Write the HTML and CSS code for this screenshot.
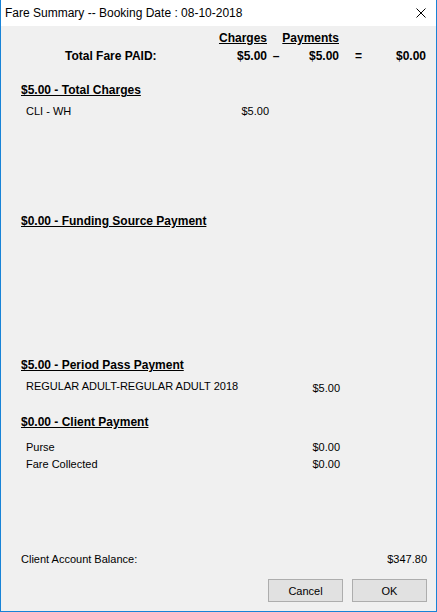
FILE: index.html
```html
<!DOCTYPE html>
<html lang="en">
<head>
  <meta charset="UTF-8" />
  <title>Fare Summary</title>
  <link rel="stylesheet" href="styles.css">
</head>
<body>

  <div class="window">
    <div class="titlebar">
      <span class="title">Fare Summary -- Booking Date : 08-10-2018</span>
      <svg class="close" width="10" height="10" viewBox="0 0 10 10">
        <path d="M0.5 0.5 L9.5 9.5 M9.5 0.5 L0.5 9.5" stroke="#000" stroke-width="1" fill="none"/>
      </svg>
    </div>

    <div class="content">
      <div class="totals">
        <span></span>
        <span class="col-b head">Charges</span>
        <span></span>
        <span class="col-d head">Payments</span>
        <span></span>
        <span></span>

        <span class="label">Total Fare PAID:</span>
        <span class="col-b">$5.00</span>
        <span class="op">&ndash;</span>
        <span class="col-d">$5.00</span>
        <span class="op">=</span>
        <span class="col-f">$0.00</span>
      </div>

      <h3 class="section-title first">$5.00 - Total Charges</h3>
      <div class="item item-charge">
        <span>CLI - WH</span>
        <span class="amt">$5.00</span>
      </div>

      <h3 class="section-title funding">$0.00 - Funding Source Payment</h3>

      <h3 class="section-title pass">$5.00 - Period Pass Payment</h3>
      <div class="item">
        <span>REGULAR ADULT-REGULAR ADULT 2018</span>
        <span class="amt low">$5.00</span>
      </div>

      <h3 class="section-title client">$0.00 - Client Payment</h3>
      <div class="item purse">
        <span>Purse</span>
        <span class="amt">$0.00</span>
      </div>
      <div class="item collected">
        <span>Fare Collected</span>
        <span class="amt">$0.00</span>
      </div>

      <div class="balance">
        <span>Client Account Balance:</span>
        <span>$347.80</span>
      </div>

      <div class="buttons">
        <button type="button">Cancel</button>
        <button type="button">OK</button>
      </div>
    </div>
  </div>

</body>
</html>
```

FILE: styles.css
```css
* { box-sizing: border-box; }

body {
  margin: 0;
  padding: 0;
  font-family: 'Liberation Sans', Arial, sans-serif;
  color: #000;
  background: #f0f0f0;
}

.window {
  width: 437px;
  height: 612px;
  background: #f0f0f0;
  border: 1px solid #1883d7;
  border-top: none;
  display: flex;
  flex-direction: column;
}

.titlebar {
  height: 26px;
  background: #ffffff;
  display: flex;
  align-items: center;
  justify-content: space-between;
  padding: 0 10px 1px 4px;
}

.title {
  font-size: 12px;
}

.close {
  display: block;
}

.content {
  padding: 5px 9px 0 20px;
  display: flex;
  flex-direction: column;
}

/* header table: label | charges | - | payments | = | balance */
.totals {
  display: grid;
  grid-template-columns: 200px 46px 18px 54px 39px 48px;
  grid-auto-rows: 14px;
  row-gap: 4px;
  font-size: 12px;
  font-weight: bold;
  line-height: 14px;
}

.totals .label {
  padding-left: 44px;
}

.col-b, .col-d, .col-f {
  justify-self: end;
  white-space: nowrap;
}

.op {
  text-align: center;
}

.head {
  text-decoration: underline;
}

.section-title {
  margin: 0;
  font-size: 12px;
  font-weight: bold;
  line-height: 14px;
  text-decoration: underline;
}

.section-title.first { margin-top: 20px; }
.section-title.funding { margin-top: 96px; }
.section-title.pass { margin-top: 130px; }
.section-title.client { margin-top: 20px; }

.item {
  display: flex;
  justify-content: space-between;
  width: 319px;
  padding-left: 5px;
  font-size: 11px;
  line-height: 14px;
  margin-top: 7px;
}

.item-charge {
  width: 248px;
}

.item .amt.low {
  padding-top: 2px;
}

.item.purse { margin-top: 11px; }
.item.collected { margin-top: 3px; }

.balance {
  display: flex;
  justify-content: space-between;
  margin-top: 81px;
  font-size: 11px;
  line-height: 14px;
}

.buttons {
  display: flex;
  justify-content: flex-end;
  gap: 9px;
  margin-top: 13px;
}

.buttons button {
  width: 75px;
  height: 23px;
  padding: 0;
  background: #e1e1e1;
  border: 1px solid #adadad;
  border-radius: 0;
  font-family: 'Liberation Sans', Arial, sans-serif;
  font-size: 11px;
  color: #000;
}
```
